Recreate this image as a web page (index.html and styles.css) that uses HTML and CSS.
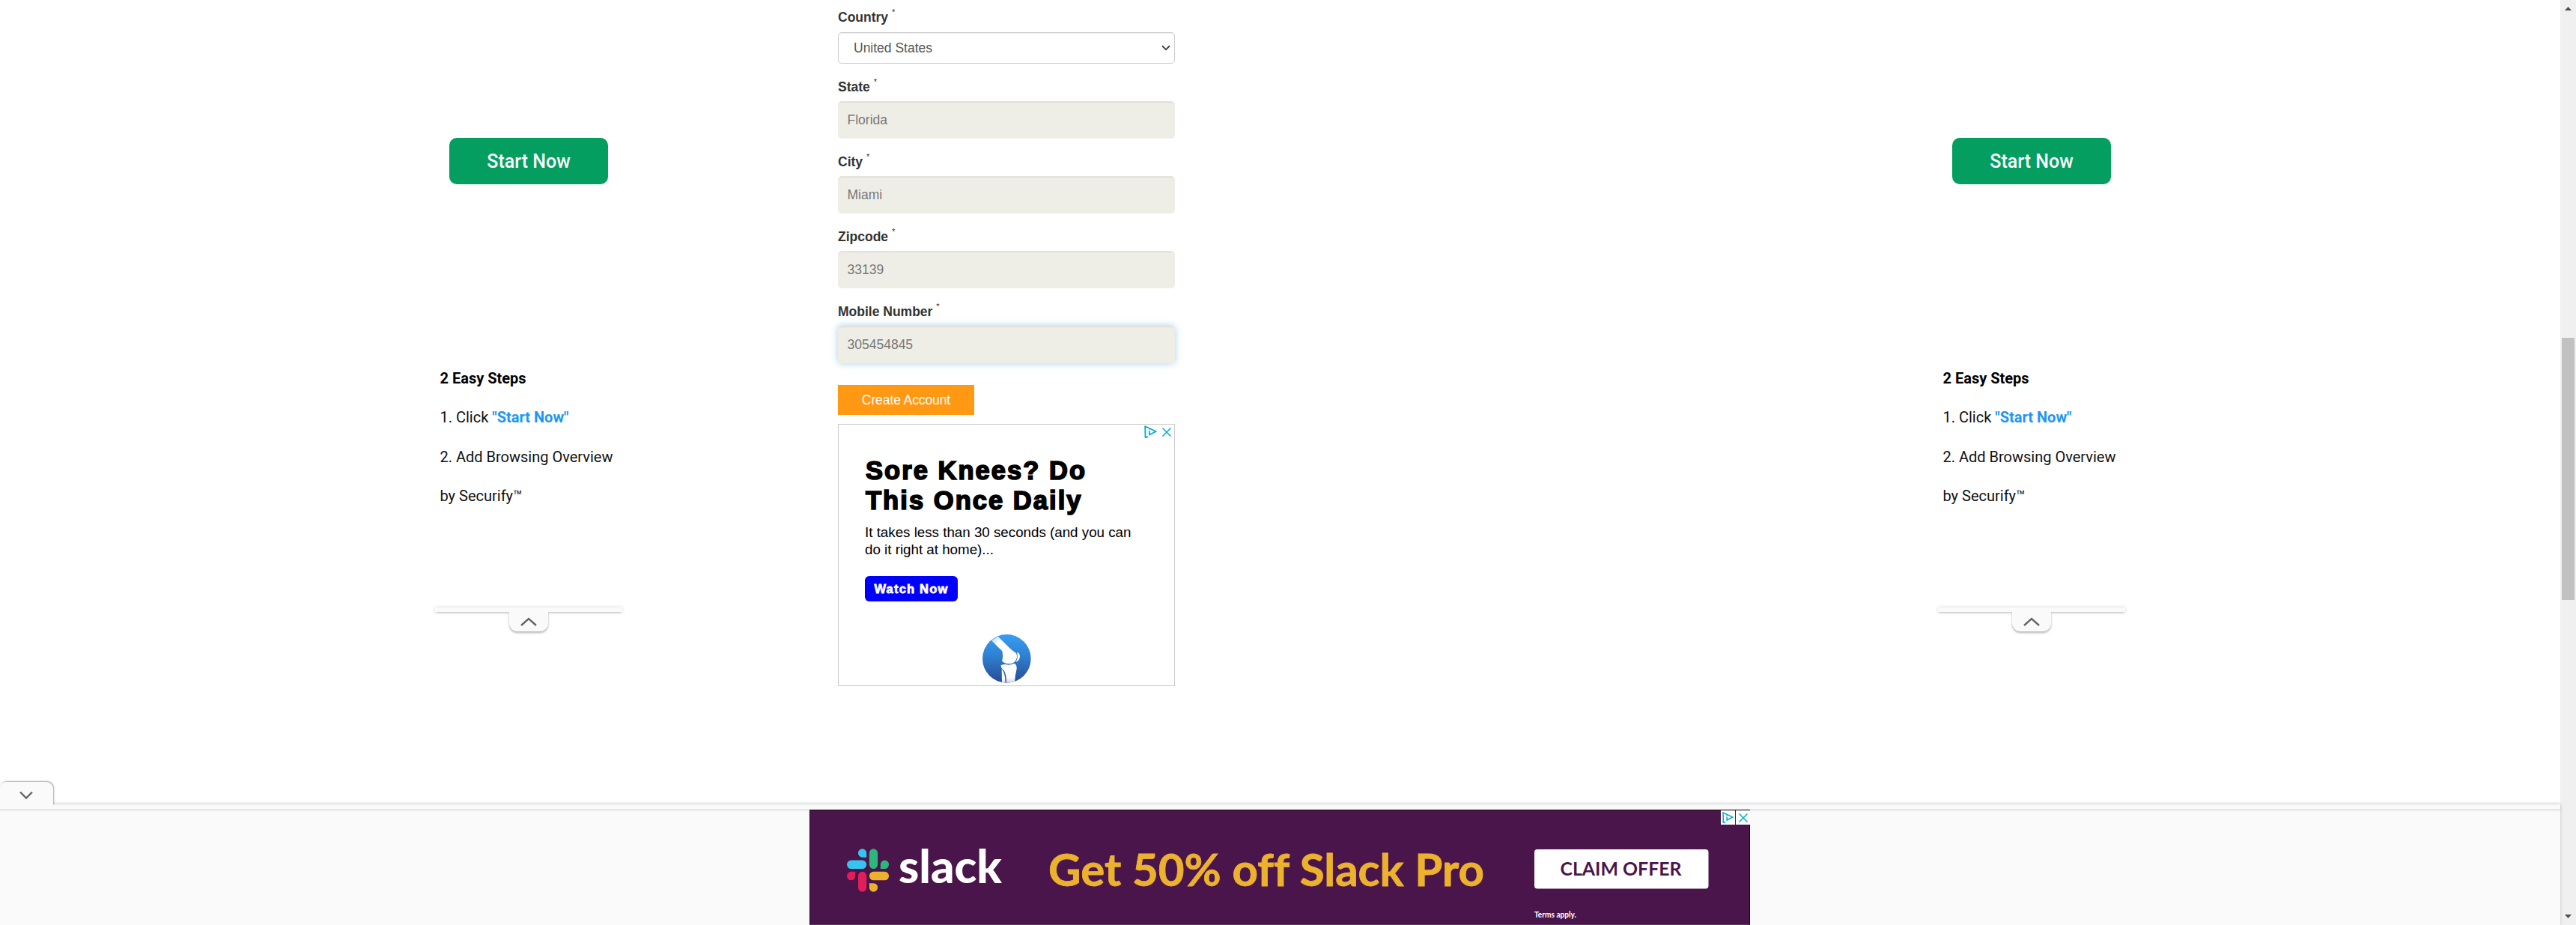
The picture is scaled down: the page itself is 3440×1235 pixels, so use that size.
FILE: index.html
```html
<!DOCTYPE html>
<html lang="en">
<head>
<meta charset="utf-8">
<title>Create Account</title>
<link rel="stylesheet" href="styles.css">
</head>
<body>
<div class="window">
  <div class="page">
    <main class="content">
      <aside class="rail rail-left">
        <button class="start">Start Now</button>
        <div class="steps">
          <p class="steps-title">2 Easy Steps</p>
          <p>1. Click <b>"Start Now"</b></p>
          <p>2. Add Browsing Overview</p>
          <p>by Securify™</p>
        </div>
        <div class="rail-bar"></div>
        <div class="rail-tab"><svg width="22" height="12" viewBox="0 0 22 12"><path d="M1 11 11 2 21 11" fill="none" stroke="#666" stroke-width="2.4"/></svg></div>
      </aside>

      <form class="form">
        <label class="label">Country <sup>*</sup></label>
        <div class="select"><span>United States</span><svg width="12" height="8" viewBox="0 0 12 8"><path d="M1 1.2 6 6.2 11 1.2" fill="none" stroke="#444" stroke-width="2"/></svg></div>
        <label class="label">State <sup>*</sup></label>
        <div class="input">Florida</div>
        <label class="label">City <sup>*</sup></label>
        <div class="input">Miami</div>
        <label class="label">Zipcode <sup>*</sup></label>
        <div class="input">33139</div>
        <label class="label">Mobile Number <sup>*</sup></label>
        <div class="input focused">305454845</div>
        <button class="create" type="button">Create Account</button>

        <section class="ad">
          <div class="ad-marks">
            <svg width="17" height="17" viewBox="0 0 17 17" fill="none" stroke="#00aecd" stroke-width="1.8"><path d="M5 15.2 1.5 16 1.2 1.2 15.8 8 7 12.5V7.2M7 3.8V5.6" stroke-linejoin="round"/></svg>
            <svg width="12" height="12" viewBox="0 0 12 12" stroke="#00aecd" stroke-width="1.5"><path d="M.5.5l11 11M11.5.5l-11 11"/></svg>
          </div>
          <h2>Sore Knees? Do<br>This Once Daily</h2>
          <p class="ad-text">It takes less than 30 seconds (and you can<br>do it right at home)...</p>
          <span class="watch">Watch Now</span>
          <svg class="knee" width="65" height="65" viewBox="0 0 195 195">
            <defs>
              <linearGradient id="sky" x1="0" y1="0" x2="0" y2="1"><stop offset="0" stop-color="#379ef3"/><stop offset=".45" stop-color="#2f7fd0"/><stop offset="1" stop-color="#274b92"/></linearGradient>
              <linearGradient id="thigh" x1="0" y1="0" x2=".55" y2=".5"><stop offset="0" stop-color="#a8d0f7"/><stop offset=".5" stop-color="#fff"/></linearGradient>
              <linearGradient id="shin" x1="0" y1="0" x2="0" y2="1"><stop offset=".7" stop-color="#fff"/><stop offset="1" stop-color="#c9d2e6"/></linearGradient>
              <clipPath id="disc"><circle cx="97" cy="97" r="97"/></clipPath>
            </defs>
            <g clip-path="url(#disc)">
              <rect width="195" height="195" fill="url(#sky)"/>
              <path d="M36 24 62 8 112 58Q124 69 134 74Q141 86 136 98 131 116 108 118 86 118 78 106 83 94 80 70 77 62 68 56Z" fill="url(#thigh)"/>
              <path d="M138 71Q151 74 150 91 147 106 133 111 145 92 138 71Z" fill="#fff"/>
              <path d="M74 123Q92 118 104 122 118 120 128 116 138 122 137 138 130 165 129 195H96Q96 160 86 144 73 135 74 123Z" fill="url(#shin)"/>
              <path d="M77 139Q91 152 92 195H78Z" fill="url(#shin)"/>
            </g>
          </svg>
        </section>
      </form>

      <aside class="rail rail-right">
        <button class="start">Start Now</button>
        <div class="steps">
          <p class="steps-title">2 Easy Steps</p>
          <p>1. Click <b>"Start Now"</b></p>
          <p>2. Add Browsing Overview</p>
          <p>by Securify™</p>
        </div>
        <div class="rail-bar"></div>
        <div class="rail-tab"><svg width="22" height="12" viewBox="0 0 22 12"><path d="M1 11 11 2 21 11" fill="none" stroke="#666" stroke-width="2.4"/></svg></div>
      </aside>
    </main>

    <footer class="dock">
      <div class="dock-tab"><svg width="18" height="12" viewBox="0 0 18 12"><path d="M1 1.5 9 9.5 17 1.5" fill="none" stroke="#666" stroke-width="2.4"/></svg></div>
      <div class="dock-bar"></div>
      <div class="banner">
        <svg class="banner-art" width="1254" height="152" viewBox="1082 1082 1254 152">
          <g transform="translate(1131 1133.3) scale(.4565 .467)">
            <path fill="#36c5f0" d="M45 0a12.300 12.300 0 1 0 0 24.600h12.300V12.300A12.300 12.300 0 0 0 45 0zM45 32.800H12.300a12.300 12.300 0 0 0 0 24.600H45a12.300 12.300 0 0 0 0-24.600z"/>
            <path fill="#2eb67d" d="M122.800 45.100a12.300 12.300 0 1 0-24.600 0v12.300h12.300a12.300 12.300 0 0 0 12.300-12.300zM90 45.100V12.300a12.300 12.300 0 1 0-24.600 0v32.800a12.300 12.300 0 1 0 24.600 0z"/>
            <path fill="#ecb22e" d="M77.700 122.800a12.300 12.300 0 1 0 0-24.600H65.400v12.300a12.300 12.300 0 0 0 12.300 12.300zM77.700 90h32.800a12.300 12.300 0 0 0 0-24.600H77.700a12.300 12.300 0 1 0 0 24.600z"/>
            <path fill="#e01e5a" d="M0 77.700a12.300 12.300 0 1 0 24.600 0V65.400H12.300A12.300 12.300 0 0 0 0 77.700zM32.800 77.700v32.800a12.300 12.300 0 0 0 24.600 0V77.700a12.300 12.300 0 0 0-24.600 0z"/>
          </g>
          <text class="brand" x="1200" y="1178.500" textLength="138" lengthAdjust="spacingAndGlyphs">slack</text>
          <text class="offer" x="1400" y="1182.500" textLength="582" lengthAdjust="spacingAndGlyphs">Get 50% off Slack Pro</text>
          <rect x="2049" y="1134" width="232.500" height="52.500" rx="4" fill="#fff"/>
          <text class="claim" x="2083.500" y="1168.800" textLength="162" lengthAdjust="spacingAndGlyphs">CLAIM OFFER</text>
          <text class="terms" x="2049" y="1224.500" textLength="56" lengthAdjust="spacingAndGlyphs">Terms apply.</text>
        </svg>
        <div class="choices">
          <span><svg width="15" height="15" viewBox="0 0 17 17" fill="none" stroke="#00aecd" stroke-width="1.8"><path d="M5 15.200 1.500 16 1.200 1.200 15.800 8 7 12.500V7.200M7 3.800V5.600"/></svg></span>
          <span><svg width="12" height="12" viewBox="0 0 12 12" stroke="#00aecd" stroke-width="1.500"><path d="M.5.5l11 11M11.500.5l-11 11"/></svg></span>
        </div>
      </div>
    </footer>
  </div>

  <div class="scrollbar">
    <svg width="9" height="5" viewBox="0 0 9 5"><path d="M0 5 4.500 0 9 5z" fill="#505050"/></svg>
    <div class="thumb"></div>
    <svg width="9" height="5" viewBox="0 0 9 5"><path d="M0 0 4.500 5 9 0z" fill="#505050"/></svg>
  </div>
</div>
</body>
</html>
```
FILE: styles.css
```css
* { box-sizing: border-box; }
body { margin: 0; background: #fff; font: 17.5px/25px "Liberation Sans", Arial, sans-serif; color: #333; overflow: hidden; }
p, h2 { margin: 0; }
svg { display: block; }
button { border: 0; padding: 0; font: inherit; }

.window { display: flex; height: 1235px; }
.page { width: 3419px; display: flex; flex-direction: column; }
.content { height: 1074px; display: flex; align-items: flex-start; }

/* side rails */
.rail { width: 250px; padding-top: 184px; display: flex; flex-direction: column; align-items: center; font-family: Roboto, sans-serif; }
.rail-left { margin-left: 581px; }
.rail-right { margin-left: 1019px; }
.start { width: 212px; height: 62px; border-radius: 10px; background: #039e60; color: #fff; font-size: 25px; font-weight: 500; line-height: 63px; }
.steps { align-self: stretch; margin-top: 233px; padding-left: 6.5px; height: 332px; font-size: 20px; line-height: 52.4px; color: #111; white-space: nowrap; }
.steps-title { font-weight: 700; color: #000; }
.steps b { color: #2196f3; }
.rail-bar { width: 250px; height: 6px; background: #fafafa; box-shadow: 0 0 5px rgba(0, 0, 0, .16), 0 2px 3px -1px rgba(0, 0, 0, .2); }
.rail-tab { width: 52px; height: 26px; padding-top: 7px; display: flex; justify-content: center; background: #fafafa; border-radius: 0 0 11px 11px; box-shadow: 0 2px 3px rgba(0, 0, 0, .3); clip-path: inset(0 -6px -8px -6px); }

/* account form */
.form { width: 450px; margin-left: 288px; display: flex; flex-direction: column; align-items: flex-start; }
.label { height: 25px; margin: 19px 0 6px; font-weight: 700; white-space: nowrap; }
.label:first-child { margin: 11px 0 7px; }
.label sup { font-size: 11px; font-weight: 400; line-height: 0; position: relative; top: -9px; vertical-align: baseline; }
.select, .input { width: 450px; border: 1px solid #ccc; border-radius: 5px; box-shadow: inset 0 1px 1px rgba(0, 0, 0, .075); }
.select { height: 42px; padding: 0 5px 0 20px; display: flex; align-items: center; justify-content: space-between; color: #555; }
.input { height: 50px; padding: 0 11.5px; line-height: 49px; background: #efeee6; border-color: #e6e5dd #efeee6 #efeee6; box-shadow: inset 0 1px 1px rgba(0, 0, 0, .075); color: #777; }
.focused { box-shadow: inset 0 1px 1px rgba(0, 0, 0, .075), 0 0 10px rgba(102, 175, 233, .6); }
.create { width: 182px; height: 40px; margin-top: 29px; background: #ff9914; color: #fff; line-height: 37px; letter-spacing: -.1px; }

/* inline advert */
.ad { width: 450px; height: 350px; margin-top: 12px; padding: 1px 0 0 35px; border: 1px solid #ccc; font-family: "Liberation Sans", Arial, sans-serif; color: #000; }
.ad-marks { height: 17px; padding-right: 4px; display: flex; justify-content: flex-end; align-items: center; gap: 7px; }
.ad h2 { margin: 23px 0 0 1px; font-size: 34.5px; line-height: 40px; font-weight: 700; letter-spacing: 2.05px; -webkit-text-stroke: 1.7px #000; white-space: nowrap; }
.ad-text { margin-top: 11px; font-size: 18.75px; line-height: 23.4px; white-space: nowrap; }
.watch { display: block; width: 124px; height: 34px; margin-top: 23px; border-radius: 6px; background: #00f; color: #fff; font-size: 16.5px; font-weight: 700; line-height: 34px; letter-spacing: 1.2px; text-align: center; -webkit-text-stroke: .8px #fff; }
.knee { margin: 44px 0 0 157px; }

/* bottom dock */
.dock { position: relative; height: 161px; background: #fafafa; box-shadow: 0 -1px 4px rgba(0, 0, 0, .2); }
.dock-tab { position: absolute; left: 0; top: -30px; width: 71px; height: 31px; padding: 12px 0 0 26px; background: #fafafa; border-radius: 8px 9px 0 0; box-shadow: 1px -1px 2px rgba(0, 0, 0, .34); clip-path: inset(-5px -6px 0 0); }
.dock-bar { height: 7px; border-bottom: 1px solid #e5e5e5; box-shadow: 0 1px 3px rgba(0, 0, 0, .1); }
.banner { position: relative; width: 1256px; height: 154px; margin-left: 1081px; border: 1px solid #111; border-bottom-color: #653565; background: #4a154b; }
.choices { position: absolute; right: -1px; top: 0; display: flex; gap: 1px; }
.choices span { width: 19px; height: 19px; display: flex; align-items: center; justify-content: center; background: #fff; }
.brand { font: 900 60px Lato, sans-serif; fill: #fff; }
.offer { font: 700 59px Lato, sans-serif; font-variant-ligatures: none; fill: #ecb22e; stroke: #ecb22e; stroke-width: .8px; }
.claim { font: 700 24px Lato, sans-serif; fill: #4a154b; }
.terms { font: 700 10.5px Lato, sans-serif; fill: #fff; }

/* window scrollbar */
.scrollbar { width: 21px; padding: 9px 0; display: flex; flex-direction: column; align-items: center; background: #f0f0f0; }
.thumb { width: 17px; height: 350px; margin: 437px 0 420px; background: #c1c1c1; }
```
